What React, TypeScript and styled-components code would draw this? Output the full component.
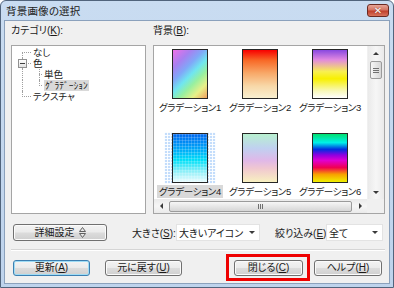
import React from 'react';
import styled, { createGlobalStyle, css } from 'styled-components';

const GlobalStyle = createGlobalStyle`
  html, body { margin: 0; padding: 0; background: #ffffff; }
  body {
    font-family: "Liberation Sans", "Noto Sans CJK JP", sans-serif;
    font-size: 10px;
    color: #1a1a1a;
    font-feature-settings: "palt";
  }
  * { box-sizing: border-box; }
`;

const Window = styled.div`
  width: 394px;
  height: 288px;
  display: flex;
  flex-direction: column;
  background: linear-gradient(180deg, #c9dcf1 0%, #bed3ec 100%);
  border: 1px solid #51647c;
  border-radius: 6px 6px 0 0;
  padding: 0 3px 3px;
`;

const TitleBar = styled.div`
  height: 19px;
  flex: none;
  display: flex;
  align-items: center;
  justify-content: space-between;
  padding-left: 2px;
`;

const Title = styled.span`
  font-size: 10.5px;
  color: #202020;
  letter-spacing: 0.2px;
`;

const CloseBtn = styled.div`
  width: 22px;
  height: 13px;
  margin-right: 1px;
  border: 1px solid #6b2a22;
  border-radius: 3px;
  background: linear-gradient(180deg, #e7a597 0%, #d47563 45%, #c0402c 55%, #d8735c 100%);
  display: flex;
  align-items: center;
  justify-content: center;
  color: #ffffff;
  font-family: "DejaVu Sans", sans-serif;
  font-weight: bold;
  font-size: 10px;
  line-height: 1;
  text-shadow: 0 0 1px #6b2a22;
`;

const Body = styled.div`
  flex: 1;
  display: flex;
  flex-direction: column;
  background: #f0f0f0;
  border: 1px solid #8ba1bc;
  padding: 3px 4px 0 6px;
`;

const TopGrid = styled.div`
  display: grid;
  grid-template-columns: 135px 1fr;
  grid-template-rows: 21px 169px;
  column-gap: 7px;
`;

const FieldLabel = styled.div`
  line-height: 14px;
  white-space: nowrap;
`;

const Key = styled.span`
  text-decoration: underline;
  text-underline-offset: 1px;
`;

const TreeBox = styled.div`
  background: #ffffff;
  border: 1px solid #a5a5a5;
  padding: 1px 0 0 3px;
  font-size: 9.5px;
`;

const TreeRow = styled.div`
  display: flex;
  align-items: center;
  height: 11px;
  white-space: nowrap;
`;

const Guide = styled.span<{ $w: number; $x: number; $up?: boolean; $down?: boolean; $branch?: boolean }>`
  position: relative;
  flex: none;
  width: ${(p) => p.$w}px;
  height: 11px;
  &::before {
    content: '';
    display: ${(p) => (p.$up || p.$down ? 'block' : 'none')};
    position: absolute;
    left: ${(p) => p.$x}px;
    top: ${(p) => (p.$up ? 0 : 5)}px;
    bottom: ${(p) => (p.$down ? 0 : 5)}px;
    border-left: 1px dotted #a0a0a0;
  }
  &::after {
    content: '';
    display: ${(p) => (p.$branch ? 'block' : 'none')};
    position: absolute;
    left: ${(p) => p.$x}px;
    right: 0;
    top: 5px;
    border-top: 1px dotted #a0a0a0;
  }
`;

const ExpandBox = styled.span`
  position: absolute;
  left: 3px;
  top: 1px;
  width: 9px;
  height: 9px;
  z-index: 1;
  border: 1px solid #919191;
  background: linear-gradient(180deg, #ffffff, #e2e2e2);
  &::after {
    content: '';
    position: absolute;
    left: 1px;
    right: 1px;
    top: 3px;
    border-top: 1px solid #404040;
  }
`;

const NodeText = styled.span<{ $selected?: boolean; $indent?: number }>`
  margin-left: ${(p) => p.$indent ?? 1}px;
  height: 11px;
  line-height: 11px;
  padding: 0 1px;
  ${(p) =>
    p.$selected &&
    css`
      background: #d9d9d9;
      font-size: 9.5px;
      font-feature-settings: normal;
    `}
`;

const Gallery = styled.div`
  background: #ffffff;
  border: 1px solid #a5a5a5;
  display: grid;
  grid-template-columns: 1fr 17px;
  grid-template-rows: 1fr 14px;
  overflow: hidden;
`;

const ThumbGrid = styled.div`
  display: grid;
  grid-template-columns: repeat(3, 70px);
  align-content: start;
  row-gap: 18px;
  padding: 2px 0 0 1px;
  overflow: hidden;
`;

const Cell = styled.div`
  display: flex;
  flex-direction: column;
  align-items: center;
`;

const ThumbFrame = styled.div<{ $selected?: boolean }>`
  padding: 1px 8px;
  ${(p) =>
    p.$selected &&
    css`
      background-color: #c4ddfb;
      background-image: linear-gradient(90deg, rgba(255, 255, 255, 0.9) 1px, transparent 1px),
        linear-gradient(rgba(255, 255, 255, 0.9) 1px, transparent 1px);
      background-size: 3px 3px;
    `}
`;

const Thumb = styled.div<{ $bg: string; $selected?: boolean }>`
  position: relative;
  width: 36px;
  height: 50px;
  border: 1px solid #262626;
  background: ${(p) => p.$bg};
  ${(p) =>
    p.$selected &&
    css`
      &::after {
        content: '';
        position: absolute;
        inset: 0;
        background-image: linear-gradient(90deg, rgba(255, 255, 255, 0.18) 1px, transparent 1px),
          linear-gradient(rgba(255, 255, 255, 0.18) 1px, transparent 1px);
        background-size: 3px 3px;
      }
    `}
`;

const Caption = styled.span<{ $selected?: boolean }>`
  margin-top: 1px;
  line-height: 13px;
  padding: 0 2px;
  font-size: 9.5px;
  letter-spacing: -0.3px;
  white-space: nowrap;
  background: ${(p) => (p.$selected ? '#d9d9d9' : 'transparent')};
`;

const VScroll = styled.div`
  display: flex;
  flex-direction: column;
  align-items: center;
  background: linear-gradient(90deg, #eaeaea, #f6f6f6 50%, #eaeaea);
  border-left: 1px solid #f0f0f0;
`;

const HScroll = styled.div`
  display: flex;
  align-items: center;
  background: linear-gradient(180deg, #eaeaea, #f6f6f6 50%, #eaeaea);
`;

const Corner = styled.div`
  background: #f0f0f0;
`;

const ArrowCell = styled.div`
  flex: none;
  width: 14px;
  height: 14px;
  display: flex;
  align-items: center;
  justify-content: center;
`;

const Tri = styled.span<{ $dir: 'up' | 'down' | 'left' | 'right'; $size?: number }>`
  width: 0;
  height: 0;
  ${(p) => {
    const s = p.$size ?? 3;
    switch (p.$dir) {
      case 'up':
        return css`border-left: ${s}px solid transparent; border-right: ${s}px solid transparent; border-bottom: ${s}px solid #3a3a3a;`;
      case 'down':
        return css`border-left: ${s}px solid transparent; border-right: ${s}px solid transparent; border-top: ${s}px solid #3a3a3a;`;
      case 'left':
        return css`border-top: ${s}px solid transparent; border-bottom: ${s}px solid transparent; border-right: ${s}px solid #3a3a3a;`;
      default:
        return css`border-top: ${s}px solid transparent; border-bottom: ${s}px solid transparent; border-left: ${s}px solid #3a3a3a;`;
    }
  }}
`;

const VThumb = styled.div`
  width: 12px;
  height: 18px;
  margin-top: 1px;
  border: 1px solid #9b9b9b;
  border-radius: 2px;
  background: linear-gradient(90deg, #f6f6f6, #e6e6e6 50%, #d6d6d6);
  display: flex;
  flex-direction: column;
  align-items: center;
  justify-content: center;
  gap: 1px;
`;

const GripH = styled.span`
  width: 6px;
  height: 1px;
  background: #707070;
`;

const Spacer = styled.div`
  flex: 1;
`;

const HThumb = styled.div`
  flex: 1;
  height: 11px;
  margin: 0 1px;
  border: 1px solid #9b9b9b;
  border-radius: 2px;
  background: linear-gradient(180deg, #f6f6f6, #e6e6e6 50%, #d6d6d6);
  display: flex;
  align-items: center;
  justify-content: center;
  gap: 1px;
`;

const GripV = styled.span`
  width: 1px;
  height: 5px;
  background: #707070;
`;

const ControlRow = styled.div`
  display: flex;
  align-items: center;
  height: 17px;
  margin-top: 10px;
  padding-left: 2px;
`;

const Button = styled.button<{ $w: number; $h?: number; $primary?: boolean }>`
  flex: none;
  width: ${(p) => p.$w}px;
  height: ${(p) => p.$h ?? 16}px;
  padding: 0;
  font: inherit;
  font-size: 10px;
  color: #1a1a1a;
  border: 1px solid #707070;
  border-radius: 3px;
  background: linear-gradient(180deg, #f3f3f3 0%, #ebebeb 48%, #dcdcdc 52%, #cfcfcf 100%);
  box-shadow: inset 0 0 0 1px #fbfbfb;
  display: flex;
  align-items: center;
  justify-content: center;
  gap: 4px;
  line-height: 1;
  ${(p) =>
    p.$primary &&
    css`
      border-color: #3c7fb1;
      box-shadow: inset 0 0 0 1px #9fdcf5;
    `}
`;

const InlineLabel = styled.span<{ $w: number; $ml: number }>`
  flex: none;
  width: ${(p) => p.$w}px;
  margin-left: ${(p) => p.$ml}px;
  white-space: nowrap;
`;

const Combo = styled.div<{ $w: number }>`
  flex: none;
  width: ${(p) => p.$w}px;
  height: 17px;
  background: #ffffff;
  border: 1px solid #e3e3e3;
  display: flex;
  align-items: center;
  justify-content: space-between;
  padding: 0 4px 0 2px;
  white-space: nowrap;
`;

const Separator = styled.div`
  margin-top: 8px;
  border-top: 1px solid #d5d5d5;
  border-bottom: 1px solid #ffffff;
`;

const ButtonRow = styled.div`
  display: flex;
  align-items: center;
  height: 27px;
  margin-top: 3px;
  padding-left: 2px;
  gap: 15px;
`;

const Highlight = styled.div`
  margin-left: auto;
  height: 27px;
  border: 3px solid #ee0000;
  padding: 0 4px 0 5px;
  display: flex;
  align-items: center;
`;

const HelpWrap = styled.div`
  margin-left: -11px;
  margin-right: 3px;
`;

const thumbs = [
  {
    name: 'グラデーション1',
    bg: 'linear-gradient(135deg, #f070e8 0%, #a880f0 22%, #80a8f8 38%, #70e6f0 52%, #98f0a0 66%, #e8f088 82%, #f0a060 100%)',
  },
  {
    name: 'グラデーション2',
    bg: 'linear-gradient(180deg, #f80000 0%, #f86a28 22%, #f8a868 48%, #f8d8a8 75%, #f8efd0 100%)',
  },
  {
    name: 'グラデーション3',
    bg: 'linear-gradient(180deg, #8848e0 0%, #e088e0 20%, #f8f050 45%, #f8f000 60%, #f8f8b8 85%, #ffffff 100%)',
  },
  {
    name: 'グラデーション4',
    bg: 'linear-gradient(180deg, #0068f0 0%, #00a8f8 32%, #00e0f8 55%, #98f0f8 80%, #eafcff 100%)',
  },
  {
    name: 'グラデーション5',
    bg: 'linear-gradient(180deg, #b8f0d0 0%, #c0d0f0 30%, #e0b8e8 55%, #f0c8d0 72%, #f8f0c0 100%)',
  },
  {
    name: 'グラデーション6',
    bg: 'linear-gradient(180deg, #00e070 0%, #00f0e8 18%, #0030e0 32%, #9000e0 44%, #e000d0 55%, #f00050 70%, #f8a000 84%, #f0f000 100%)',
  },
];

const SELECTED = 3;

const SpinIcon = () => (
  <svg width="7" height="11" viewBox="0 0 7 11">
    <path d="M3.5 0.5 L6.5 4.5 L0.5 4.5 Z" fill="#e8e8e8" stroke="#606060" strokeWidth="1" />
    <path d="M0.5 6.5 L6.5 6.5 L3.5 10.5 Z" fill="#e8e8e8" stroke="#606060" strokeWidth="1" />
  </svg>
);

export default function App() {
  return (
    <>
      <GlobalStyle />
      <Window>
        <TitleBar>
          <Title>背景画像の選択</Title>
          <CloseBtn>✕</CloseBtn>
        </TitleBar>
        <Body>
          <TopGrid>
            <FieldLabel>
              カテゴリ(<Key>K</Key>):
            </FieldLabel>
            <FieldLabel>
              背景(<Key>B</Key>):
            </FieldLabel>
            <TreeBox>
              <TreeRow>
                <Guide $w={16} $x={7} $down $branch />
                <NodeText>なし</NodeText>
              </TreeRow>
              <TreeRow>
                <Guide $w={16} $x={7} $up $down $branch>
                  <ExpandBox />
                </Guide>
                <NodeText>色</NodeText>
              </TreeRow>
              <TreeRow>
                <Guide $w={16} $x={7} $up $down />
                <Guide $w={11} $x={8} $up $down $branch />
                <NodeText>単色</NodeText>
              </TreeRow>
              <TreeRow>
                <Guide $w={16} $x={7} $up $down />
                <Guide $w={11} $x={8} $up $branch />
                <NodeText $selected $indent={2}>ｸﾞﾗﾃﾞｰｼｮﾝ</NodeText>
              </TreeRow>
              <TreeRow>
                <Guide $w={16} $x={7} $up $branch />
                <NodeText>テクスチャ</NodeText>
              </TreeRow>
            </TreeBox>
            <Gallery>
              <ThumbGrid>
                {thumbs.map((t, i) => (
                  <Cell key={t.name}>
                    <ThumbFrame $selected={i === SELECTED}>
                      <Thumb $bg={t.bg} $selected={i === SELECTED} />
                    </ThumbFrame>
                    <Caption $selected={i === SELECTED}>{t.name}</Caption>
                  </Cell>
                ))}
              </ThumbGrid>
              <VScroll>
                <ArrowCell>
                  <Tri $dir="up" />
                </ArrowCell>
                <VThumb>
                  <GripH />
                  <GripH />
                  <GripH />
                </VThumb>
                <Spacer />
                <ArrowCell>
                  <Tri $dir="down" />
                </ArrowCell>
              </VScroll>
              <HScroll>
                <ArrowCell>
                  <Tri $dir="left" />
                </ArrowCell>
                <HThumb>
                  <GripV />
                  <GripV />
                  <GripV />
                </HThumb>
                <ArrowCell>
                  <Tri $dir="right" />
                </ArrowCell>
              </HScroll>
              <Corner />
            </Gallery>
          </TopGrid>

          <ControlRow>
            <Button $w={94} $h={17}>
              <span>詳細設定</span>
              <SpinIcon />
            </Button>
            <InlineLabel $w={44} $ml={25}>
              大きさ(<Key>S</Key>):
            </InlineLabel>
            <Combo $w={84}>
              <span>大きいアイコン</span>
              <Tri $dir="down" />
            </Combo>
            <InlineLabel $w={51} $ml={15}>
              絞り込み(<Key>E</Key>):
            </InlineLabel>
            <Combo $w={57}>
              <span>全て</span>
              <Tri $dir="down" />
            </Combo>
          </ControlRow>

          <Separator />

          <ButtonRow>
            <Button $w={77} $primary>
              <span>
                更新(<Key>A</Key>)
              </span>
            </Button>
            <Button $w={77}>
              <span>
                元に戻す(<Key>U</Key>)
              </span>
            </Button>
            <Highlight>
              <Button $w={69}>
                <span>
                  閉じる(<Key>C</Key>)
                </span>
              </Button>
            </Highlight>
            <HelpWrap>
              <Button $w={68}>
                <span>
                  ヘルプ(<Key>H</Key>)
                </span>
              </Button>
            </HelpWrap>
          </ButtonRow>
        </Body>
      </Window>
    </>
  );
}
